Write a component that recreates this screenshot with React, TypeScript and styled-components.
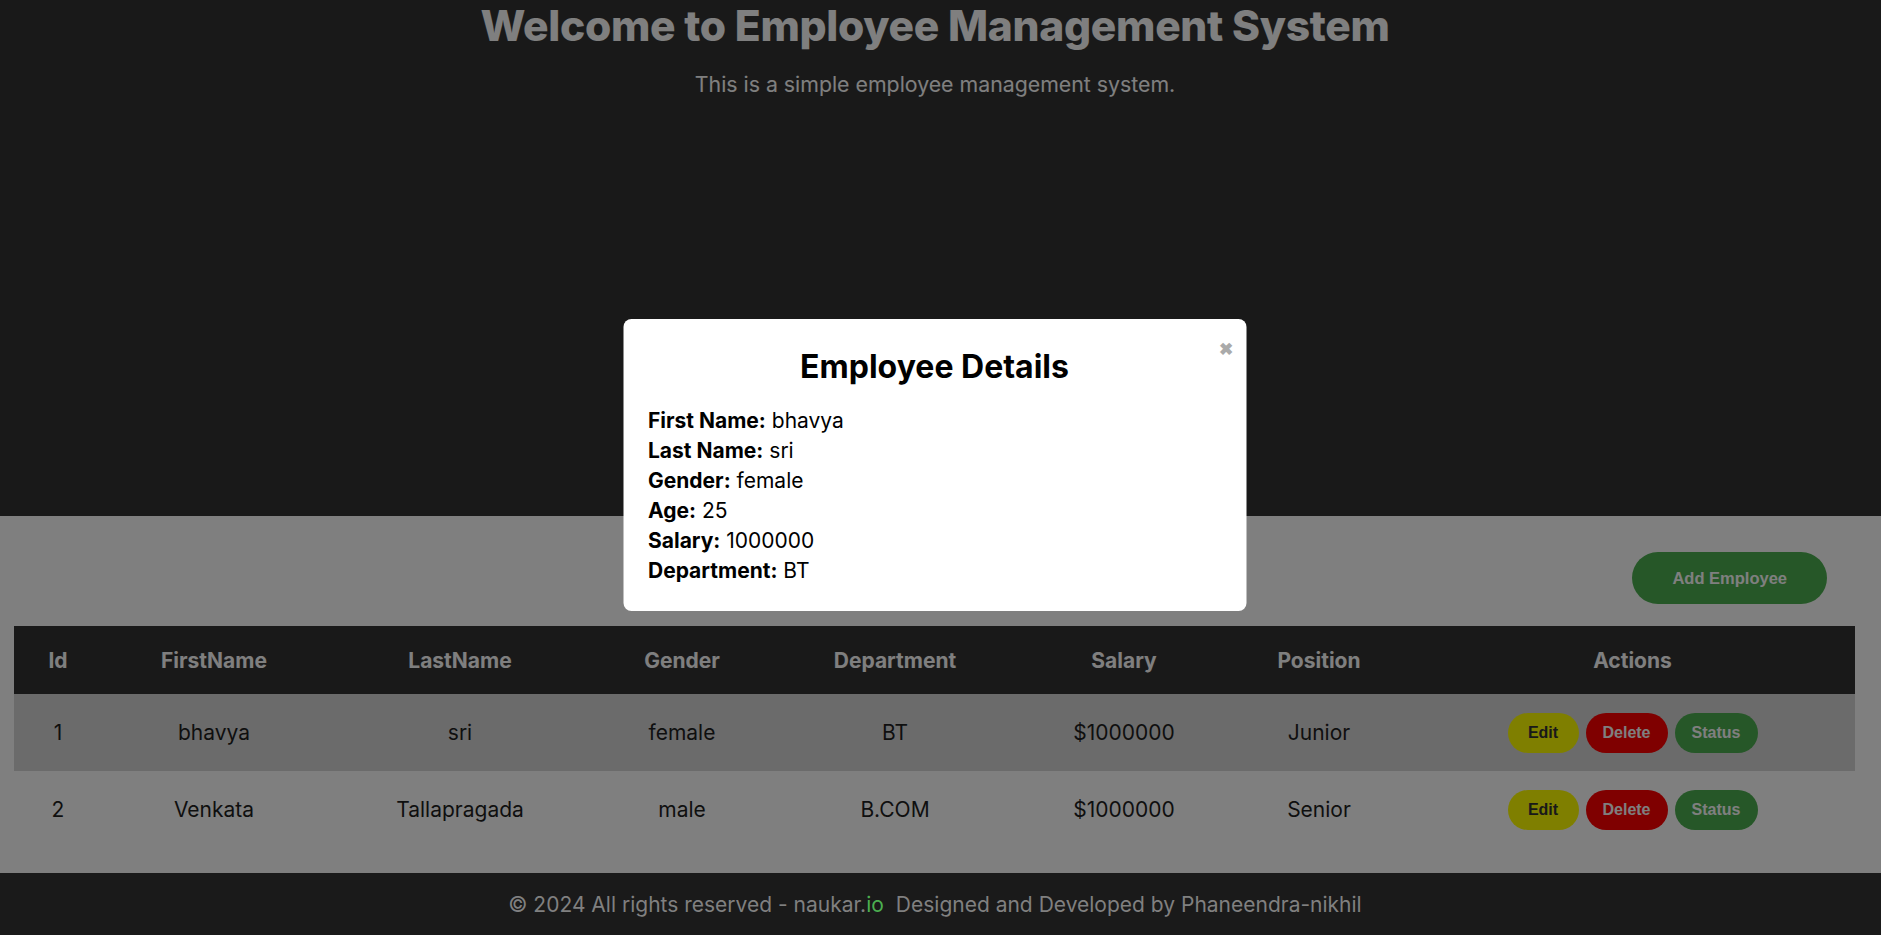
import React from "react";
import styled, { createGlobalStyle } from "styled-components";

const FONT = `"Inter", "Noto Sans", sans-serif`;
const BTN_FONT = `"Liberation Sans", Arial, sans-serif`;

const GlobalStyle = createGlobalStyle`
  html, body { margin: 0; padding: 0; }
  body { font-family: ${FONT}; background: #ffffff; }
  * { box-sizing: border-box; }
`;

const Page = styled.div`
  display: flex;
  flex-direction: column;
  min-height: 100vh;
`;

const Header = styled.header`
  height: 516px;
  background: #333333;
  color: #ffffff;
  display: flex;
  flex-direction: column;
  align-items: center;
  padding: 0 11px 0 0;
`;

const Title = styled.h1`
  margin: 0;
  font-size: 42.5px;
  font-weight: 800;
  line-height: 52px;
  letter-spacing: -0.3px;
`;

const Subtitle = styled.p`
  margin: 18px 0 0;
  font-size: 21.3px;
  font-weight: 400;
  line-height: 28px;
`;

const Main = styled.main`
  background: #ffffff;
  padding: 36px 26px 25px 14px;
  display: flex;
  flex-direction: column;
  gap: 22px;
`;

const Toolbar = styled.div`
  display: flex;
  justify-content: flex-end;
  padding-right: 28px;
`;

const AddButton = styled.button`
  height: 52px;
  padding: 0 40px;
  border: none;
  border-radius: 26px;
  background: #4caf50;
  color: #ffffff;
  font-family: ${BTN_FONT};
  font-weight: 700;
  font-size: 16.5px;
  cursor: pointer;
`;

const Table = styled.table`
  width: 100%;
  border-collapse: collapse;
  table-layout: fixed;
`;

const HeadRow = styled.tr`
  background: #333333;
  height: 68px;
`;

const Th = styled.th`
  color: #ffffff;
  font-weight: 700;
  font-size: 21px;
  text-align: center;
  padding: 0;
`;

const BodyRow = styled.tr<{ $shade: boolean }>`
  background: ${(p) => (p.$shade ? "#d6d6d6" : "transparent")};
  height: 77px;
`;

const Td = styled.td`
  color: #1e1e1e;
  font-size: 21px;
  text-align: center;
  padding: 0;
`;

const Actions = styled.div`
  display: flex;
  justify-content: center;
  gap: 7px;
`;

const ActionButton = styled.button<{ $bg: string; $fg: string; $min: number }>`
  height: 40px;
  min-width: ${(p) => p.$min}px;
  padding: 0 16px;
  border: none;
  border-radius: 20px;
  background: ${(p) => p.$bg};
  color: ${(p) => p.$fg};
  font-family: ${BTN_FONT};
  font-weight: 700;
  font-size: 16px;
  cursor: pointer;
`;

const Footer = styled.footer`
  position: relative;
  z-index: 2;
  flex: 1;
  min-height: 62px;
  background: #1a1a1a;
  color: #808080;
  display: flex;
  align-items: center;
  justify-content: center;
  padding: 0 11px 0 0;
  font-size: 21px;
`;

const FooterText = styled.p`
  margin: 0;
`;

const Green = styled.span`
  color: #4caf50;
`;

const Credit = styled.span`
  margin-left: 12px;
`;

const Backdrop = styled.div`
  position: fixed;
  inset: 0;
  background: rgba(0, 0, 0, 0.5);
  z-index: 1;
`;

const Modal = styled.div`
  position: fixed;
  top: calc(50% - 3px);
  left: calc(50% - 6px);
  transform: translate(-50%, -50%);
  width: 623px;
  background: #ffffff;
  border-radius: 8px;
  padding: 26px 25px 25px;
  z-index: 3;
  color: #000000;
`;

const Close = styled.span`
  position: absolute;
  top: 22px;
  right: 13px;
  color: #aaaaaa;
  font-size: 17px;
  font-weight: 700;
  line-height: 1;
  cursor: pointer;
`;

const ModalTitle = styled.h2`
  margin: 0 0 17px;
  text-align: center;
  font-size: 32px;
  font-weight: 700;
  line-height: 44px;
`;

const DetailLine = styled.p`
  margin: 0;
  font-size: 21px;
  line-height: 30px;
`;

const Label = styled.strong`
  font-weight: 700;
`;

const columns = [
  { label: "Id", width: 88 },
  { label: "FirstName", width: 224 },
  { label: "LastName", width: 268 },
  { label: "Gender", width: 176 },
  { label: "Department", width: 250 },
  { label: "Salary", width: 208 },
  { label: "Position", width: 182 },
  { label: "Actions", width: 445 },
];

const employees = [
  { id: 1, first: "bhavya", last: "sri", gender: "female", dept: "BT", salary: 1000000, position: "Junior" },
  { id: 2, first: "Venkata", last: "Tallapragada", gender: "male", dept: "B.COM", salary: 1000000, position: "Senior" },
];

const details: [string, string][] = [
  ["First Name:", "bhavya"],
  ["Last Name:", "sri"],
  ["Gender:", "female"],
  ["Age:", "25"],
  ["Salary:", "1000000"],
  ["Department:", "BT"],
];

export default function App() {
  return (
    <>
      <GlobalStyle />
      <Page>
        <Header>
          <Title>Welcome to Employee Management System</Title>
          <Subtitle>This is a simple employee management system.</Subtitle>
        </Header>
        <Main>
          <Toolbar>
            <AddButton>Add Employee</AddButton>
          </Toolbar>
          <Table>
            <colgroup>
              {columns.map((c) => (
                <col key={c.label} style={{ width: c.width }} />
              ))}
            </colgroup>
            <thead>
              <HeadRow>
                {columns.map((c) => (
                  <Th key={c.label}>{c.label}</Th>
                ))}
              </HeadRow>
            </thead>
            <tbody>
              {employees.map((e, i) => (
                <BodyRow key={e.id} $shade={i % 2 === 0}>
                  <Td>{e.id}</Td>
                  <Td>{e.first}</Td>
                  <Td>{e.last}</Td>
                  <Td>{e.gender}</Td>
                  <Td>{e.dept}</Td>
                  <Td>${e.salary}</Td>
                  <Td>{e.position}</Td>
                  <Td>
                    <Actions>
                      <ActionButton $bg="#ffff00" $fg="#333333" $min={71}>Edit</ActionButton>
                      <ActionButton $bg="#ff0000" $fg="#ffffff" $min={82}>Delete</ActionButton>
                      <ActionButton $bg="#4caf50" $fg="#ffffff" $min={83}>Status</ActionButton>
                    </Actions>
                  </Td>
                </BodyRow>
              ))}
            </tbody>
          </Table>
        </Main>
        <Footer>
          <FooterText>
            © 2024 All rights reserved - naukar.<Green>io</Green>
            <Credit>Designed and Developed by Phaneendra-nikhil</Credit>
          </FooterText>
        </Footer>
      </Page>
      <Backdrop />
      <Modal>
        <Close>✖</Close>
        <ModalTitle>Employee Details</ModalTitle>
        {details.map(([k, v]) => (
          <DetailLine key={k}>
            <Label>{k}</Label> {v}
          </DetailLine>
        ))}
      </Modal>
    </>
  );
}
